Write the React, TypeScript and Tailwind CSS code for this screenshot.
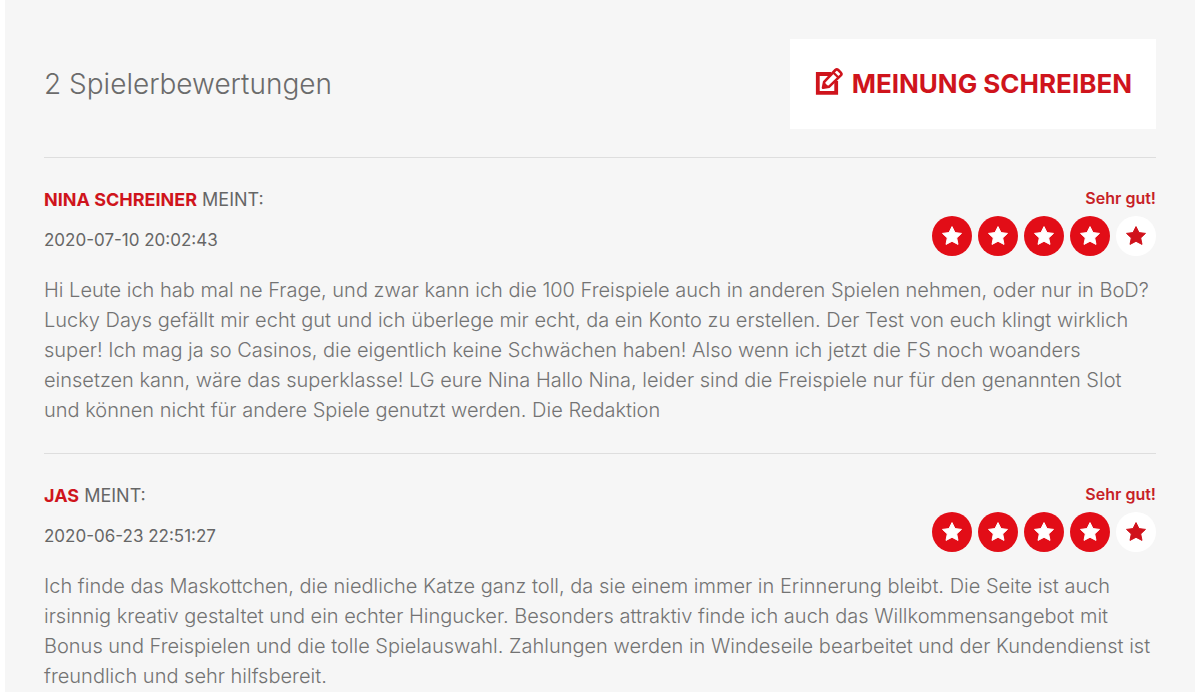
import React from "react";

interface Review {
  author: string;
  date: string;
  verdict: string;
  rating: number;
  text: string;
}

const MAX_RATING = 5;

const reviews: Review[] = [
  {
    author: "Nina Schreiner",
    date: "2020-07-10 20:02:43",
    verdict: "Sehr gut!",
    rating: 4,
    text: "Hi Leute ich hab mal ne Frage, und zwar kann ich die 100 Freispiele auch in anderen Spielen nehmen, oder nur in BoD? Lucky Days gefällt mir echt gut und ich überlege mir echt, da ein Konto zu erstellen. Der Test von euch klingt wirklich super! Ich mag ja so Casinos, die eigentlich keine Schwächen haben! Also wenn ich jetzt die FS noch woanders einsetzen kann, wäre das superklasse! LG eure Nina Hallo Nina, leider sind die Freispiele nur für den genannten Slot und können nicht für andere Spiele genutzt werden. Die Redaktion",
  },
  {
    author: "Jas",
    date: "2020-06-23 22:51:27",
    verdict: "Sehr gut!",
    rating: 4,
    text: "Ich finde das Maskottchen, die niedliche Katze ganz toll, da sie einem immer in Erinnerung bleibt. Die Seite ist auch irsinnig kreativ gestaltet und ein echter Hingucker. Besonders attraktiv finde ich auch das Willkommensangebot mit Bonus und Freispielen und die tolle Spielauswahl. Zahlungen werden in Windeseile bearbeitet und der Kundendienst ist freundlich und sehr hilfsbereit.",
  },
];

const EditIcon = () => (
  <svg viewBox="0 0 30 34" className="h-[34px] w-[30px]" fill="none" aria-hidden="true">
    <path
      d="M17 7H3.8v18.8h18.4V14"
      stroke="currentColor"
      strokeWidth="3.8"
    />
    <path
      d="M9 20.8l1.2-6L21.4 3a2 2 0 0 1 2.8 0l2.6 2.6a2 2 0 0 1 0 2.8L15.2 19.6z"
      fill="white"
      stroke="currentColor"
      strokeWidth="2.6"
      strokeLinejoin="round"
    />
    <path d="M19.2 5.4l5.4 5.4" stroke="currentColor" strokeWidth="2.2" />
    <path d="M8.4 21.4l1.4-6.6 5.2 5.2z" fill="currentColor" />
  </svg>
);

const StarIcon = () => (
  <svg viewBox="0 0 24 24" className="h-6 w-6" aria-hidden="true">
    <path
      d="M12 2.6l3 6 6.5.8-4.8 4.5 1.3 6.5L12 17.3l-6 3.1 1.3-6.5-4.8-4.5 6.5-.8z"
      fill="currentColor"
      stroke="currentColor"
      strokeWidth="1"
      strokeLinejoin="round"
    />
  </svg>
);

const Rating = ({ value }: { value: number }) => (
  <div
    className="flex gap-1.5"
    role="img"
    aria-label={`${value} / ${MAX_RATING}`}
  >
    {Array.from({ length: MAX_RATING }, (_, i) => (
      <span
        key={i}
        className={
          i < value
            ? "flex h-10 w-10 items-center justify-center rounded-full bg-[#e20d17] text-white"
            : "flex h-10 w-10 items-center justify-center rounded-full bg-white text-[#d0121b]"
        }
      >
        <StarIcon />
      </span>
    ))}
  </div>
);

const ReviewItem = ({ review }: { review: Review }) => (
  <article className="border-t border-[#dedede] py-7">
    <div className="flex items-start justify-between gap-4">
      <div className="flex flex-col gap-3 leading-7 text-[#666]">
        <h3 className="text-lg leading-7 uppercase">
          <strong className="font-bold text-[#cf141c]">{review.author}</strong>{" "}
          meint:
        </h3>
        <time className="text-[17px] leading-7">{review.date}</time>
      </div>
      <div className="flex flex-col items-end gap-1.5">
        <p className="text-base font-semibold text-[#c71f27]">{review.verdict}</p>
        <Rating value={review.rating} />
      </div>
    </div>
    <p className="mt-[19px] text-xl leading-[30px] font-light text-[#737373]">
      {review.text}
    </p>
  </article>
);

export default function App() {
  return (
    <main className="min-h-screen bg-white px-[5px] font-['Inter',sans-serif]">
      <section className="min-h-screen bg-[#f6f6f6] px-[39px] pt-[39px]">
        <header className="flex items-center justify-between gap-4 pb-7">
          <h2 className="text-[28px] leading-9 font-light text-[#6b6b6b]">
            {reviews.length} Spielerbewertungen
          </h2>
          <button
            type="button"
            className="flex cursor-pointer items-center gap-2 bg-white px-6 py-7 text-[26px] leading-[34px] font-bold text-[#cf141c] uppercase"
          >
            <EditIcon />
            Meinung schreiben
          </button>
        </header>
        {reviews.map((review) => (
          <ReviewItem key={review.date} review={review} />
        ))}
      </section>
    </main>
  );
}
